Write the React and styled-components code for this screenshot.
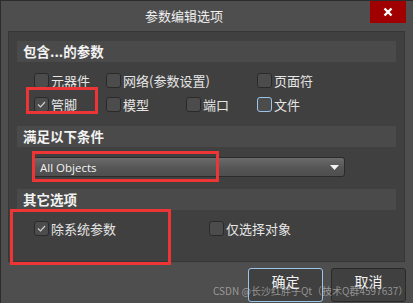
import React from 'react';
import styled, { createGlobalStyle } from 'styled-components';

const GlobalStyle = createGlobalStyle`
  html, body { margin: 0; padding: 0; background: #4e4e4e; }
  body { font-family: "Noto Sans CJK SC", "Noto Sans", sans-serif; }
`;

const Window = styled.div`
  position: relative;
  width: 413px;
  height: 303px;
  overflow: hidden;
  background: #4e4e4e;
  border-top: 1px solid #2c2c2c;
  border-left: 1px solid #2c2c2c;
  box-sizing: border-box;
  color: #ececec;
  font-size: 13px;
`;

const TitleBar = styled.div`
  height: 30px;
  display: flex;
  align-items: flex-start;
  justify-content: center;
  position: relative;
`;

const Title = styled.div`
  margin-top: 6px;
  margin-right: 46px;
  font-size: 13px;
  line-height: 18px;
  color: #f0f0f0;
`;

const CloseButton = styled.div`
  position: absolute;
  top: 0;
  right: 7px;
  width: 36px;
  height: 22px;
  background: #a00000;
  display: flex;
  align-items: center;
  justify-content: center;
`;

const Panel = styled.div`
  margin-left: 7px;
  width: 397px;
  height: 231px;
  box-sizing: border-box;
  background: #404040;
  border: 1px solid #363636;
  padding: 9px 8px 0 8px;
`;

const Header = styled.div`
  height: 21px;
  background: #4a4a4a;
  font-weight: 700;
  font-size: 13.5px;
  line-height: 21px;
  padding-left: 6px;
  color: #f2f2f2;
  margin-top: ${p => p.$top || 0}px;
`;

const OptionGrid = styled.div`
  display: grid;
  grid-template-columns: 72px 80px 71px 1fr;
  row-gap: 8px;
  padding: 10px 0 0 17px;
`;

const Option = styled.label`
  display: flex;
  align-items: center;
  gap: 2px;
  height: 16px;
  font-size: 13px;
  color: #e6e6e6;
  grid-column: ${p => p.$span || 'auto'};
  white-space: nowrap;
`;

const Box = styled.span`
  width: 15px;
  height: 15px;
  box-sizing: border-box;
  border-radius: 3px;
  background: #4c4c4c;
  border: 1px solid ${p => (p.$focus ? '#9cc4ea' : '#2a2a2a')};
  display: flex;
  align-items: center;
  justify-content: center;
  flex: none;
`;

const Row = styled.div`
  display: grid;
  grid-template-columns: 175px 1fr;
  padding: 10px 0 0 17px;
`;

const SelectWrap = styled.div`
  padding: 10px 0 0 16px;
`;

const Select = styled.div`
  width: 312px;
  height: 20px;
  box-sizing: border-box;
  border: 1px solid #2b2b2b;
  border-radius: 3px;
  background: linear-gradient(#6b6b6b, #555555 55%, #4e4e4e);
  display: flex;
  align-items: center;
  justify-content: space-between;
  padding: 0 5px 0 6px;
  font-family: "Open Sans", "Liberation Sans", sans-serif;
  font-size: 11.5px;
  color: #f4f4f4;
`;

const Footer = styled.div`
  display: flex;
  justify-content: flex-end;
  gap: 8px;
  padding: 6px 7px 0 0;
`;

const Button = styled.div`
  width: 75px;
  height: 34px;
  box-sizing: border-box;
  border-radius: 3px;
  border: 1px solid ${p => (p.$primary ? '#9cc4ea' : '#2a2a2a')};
  background: #404040;
  display: flex;
  justify-content: center;
  padding-top: 2px;
  font-size: 14px;
  color: #f2f2f2;
`;

const Watermark = styled.div`
  position: absolute;
  left: 212px;
  top: 283px;
  font-family: "Noto Sans CJK SC", sans-serif;
  font-size: 10px;
  line-height: 14px;
  color: rgba(205, 205, 205, 0.6);
  white-space: nowrap;
`;

const Mark = styled.div`
  position: absolute;
  box-sizing: border-box;
  border: 3px solid #ee3535;
  left: ${p => p.$x}px;
  top: ${p => p.$y}px;
  width: ${p => p.$w}px;
  height: ${p => p.$h}px;
`;

const Check = () => (
  <svg width="11" height="11" viewBox="0 0 11 11">
    <path d="M2 5.5 L4.5 8 L9 3" fill="none" stroke="#cfcfcf" strokeWidth="1.2" />
  </svg>
);

function CheckItem({ label, checked, focus, span }) {
  return (
    <Option $span={span}>
      <Box $focus={focus}>{checked && <Check />}</Box>
      {label}
    </Option>
  );
}

export default function App() {
  return (
    <>
      <GlobalStyle />
      <Window>
        <TitleBar>
          <Title>参数编辑选项</Title>
          <CloseButton>
            <svg width="10" height="10" viewBox="0 0 10 10">
              <path d="M1.5 1.5 L8.5 8.5 M8.5 1.5 L1.5 8.5" stroke="#fff" strokeWidth="2.4" />
            </svg>
          </CloseButton>
        </TitleBar>
        <Panel>
          <Header>包含...的参数</Header>
          <OptionGrid>
            <CheckItem label="元器件" />
            <CheckItem label="网络(参数设置)" span="2 / 4" />
            <CheckItem label="页面符" />
            <CheckItem label="管脚" checked />
            <CheckItem label="模型" />
            <CheckItem label="端口" />
            <CheckItem label="文件" focus />
          </OptionGrid>
          <Header $top={14}>满足以下条件</Header>
          <SelectWrap>
            <Select>
              <span>All Objects</span>
              <svg width="9" height="5" viewBox="0 0 9 5">
                <path d="M0 0 L9 0 L4.5 5 Z" fill="#f4f4f4" />
              </svg>
            </Select>
          </SelectWrap>
          <Header $top={12}>其它选项</Header>
          <Row>
            <CheckItem label="除系统参数" checked />
            <CheckItem label="仅选择对象" />
          </Row>
        </Panel>
        <Footer>
          <Button $primary>确定</Button>
          <Button>取消</Button>
        </Footer>
        <Watermark>CSDN @长沙红胖子Qt（技术Q群4597637）</Watermark>
        <Mark $x={25} $y={86} $w={72} $h={27} />
        <Mark $x={31} $y={150} $w={187} $h={31} />
        <Mark $x={9} $y={208} $w={161} $h={56} />
      </Window>
    </>
  );
}
